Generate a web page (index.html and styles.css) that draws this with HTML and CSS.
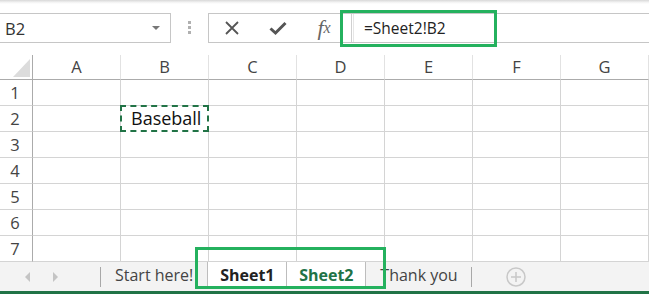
FILE: index.html
```html
<!DOCTYPE html>
<html lang="en">
<head>
    <meta charset="UTF-8">
    <title>Sheet</title>
    <link rel="stylesheet" href="styles.css">
</head>
<body>
<div class="app">
    <div class="top-edge"></div>

    <div class="formula-row">
        <div class="name-box">
            <span>B2</span>
            <span class="drop"></span>
        </div>
        <div class="grip"><i></i><i></i><i></i></div>
        <div class="formula-box">
            <div class="fb-btn">
                <svg width="16" height="16" viewBox="0 0 16 16"><path d="M2 2 L14 14 M14 2 L2 14" stroke="#555" stroke-width="1.8" fill="none"/></svg>
            </div>
            <div class="fb-btn">
                <svg width="18" height="16" viewBox="0 0 18 16"><path d="M1.5 8.5 L6.5 13 L16.5 3" stroke="#555" stroke-width="3" fill="none"/></svg>
            </div>
            <div class="fb-btn fx">f<sub>x</sub></div>
            <div class="fb-sep"></div>
            <div class="fb-text">=Sheet2!B2</div>
        </div>
    </div>

    <div class="sheet">
        <div class="corner"><span></span></div>
        <div class="col-head">A</div>
        <div class="col-head">B</div>
        <div class="col-head">C</div>
        <div class="col-head">D</div>
        <div class="col-head">E</div>
        <div class="col-head">F</div>
        <div class="col-head">G</div>
    </div>
    <div class="sheet" id="rows"></div>

    <div class="tab-bar">
        <div class="nav">
            <span class="arrow left"></span>
            <span class="arrow right"></span>
        </div>
        <div class="tab-sep"></div>
        <div class="tab">Start here!</div>
        <div class="tab active">Sheet1</div>
        <div class="tab active green">Sheet2</div>
        <div class="tab last">Thank you</div>
        <div class="tab-sep"></div>
        <div class="add-sheet">
            <svg width="20" height="20" viewBox="0 0 20 20"><circle cx="10" cy="10" r="9" stroke="#c8c8c8" stroke-width="1.5" fill="none"/><path d="M10 5 V15 M5 10 H15" stroke="#c8c8c8" stroke-width="1.5"/></svg>
        </div>
    </div>
    <div class="bottom-line"></div>

    <div class="mark mark-formula"></div>
    <div class="mark mark-tabs"></div>
</div>

<script>
    const rows = document.getElementById("rows");
    for (let r = 1; r <= 7; r++) {
        const head = document.createElement("div");
        head.className = "row-head";
        head.textContent = r;
        rows.appendChild(head);
        for (let c = 0; c < 7; c++) {
            const cell = document.createElement("div");
            cell.className = "cell";
            if (r === 2 && c === 1) {
                cell.className = "cell copied";
                cell.textContent = "Baseball";
            }
            rows.appendChild(cell);
        }
    }
</script>
</body>
</html>
```

FILE: styles.css
```css
* {
    box-sizing: border-box;
}

body {
    margin: 0;
    background-color: #fff;
    font-family: "Open Sans", "Noto Sans", sans-serif;
    color: #333;
}

.app {
    position: relative;
    width: 649px;
    height: 295px;
    overflow: hidden;
}

.top-edge {
    height: 4px;
    background: linear-gradient(#d8d8d8, #f4f4f4 60%, #fff);
}

.formula-row {
    display: flex;
    align-items: flex-start;
    height: 51px;
    padding-top: 9px;
}

.name-box {
    display: flex;
    align-items: center;
    justify-content: space-between;
    margin-left: -1px;
    width: 172px;
    height: 30px;
    padding: 0 10px 0 5px;
    border: 1px solid #c6c6c6;
    font-size: 16.5px;
    color: #333;
}

.drop {
    width: 0;
    height: 0;
    border-left: 4px solid transparent;
    border-right: 4px solid transparent;
    border-top: 4px solid #777;
}

.grip {
    display: flex;
    flex-direction: column;
    align-items: center;
    gap: 2px;
    width: 37px;
    padding-top: 8px;
}

.grip i {
    width: 3px;
    height: 3px;
    background-color: #b0b0b0;
}

.formula-box {
    display: flex;
    align-items: center;
    flex: 1;
    height: 30px;
    margin-right: -1px;
    border: 1px solid #c6c6c6;
}

.fb-btn {
    display: flex;
    align-items: center;
    justify-content: center;
    width: 46px;
    height: 100%;
}

.fx {
    width: 50px;
    padding-right: 4px;
    font-family: "Liberation Serif", serif;
    font-style: italic;
    font-size: 22px;
    color: #666;
}

.fx sub {
    font-size: 16px;
    vertical-align: -1px;
}

.fb-sep {
    width: 3px;
    height: 100%;
    border-left: 1px solid #d0d0d0;
    border-right: 1px solid #e6e6e6;
}

.fb-text {
    padding-left: 10px;
    font-size: 15.5px;
    color: #222;
}

.sheet {
    display: grid;
    grid-template-columns: 33px repeat(7, 88px);
}

.corner {
    position: relative;
    height: 25px;
    border-right: 1px solid #ababab;
    border-bottom: 1px solid #ababab;
}

.corner span {
    position: absolute;
    right: 2px;
    bottom: 2px;
    width: 0;
    height: 0;
    border-left: 17px solid transparent;
    border-bottom: 18px solid #dcdcdc;
}

.col-head {
    height: 25px;
    border-right: 1px solid #e2e2e2;
    border-bottom: 1px solid #ababab;
    text-align: center;
    font-size: 16.5px;
    line-height: 24px;
    color: #444;
}

.row-head {
    height: 26px;
    padding-right: 2px;
    border-right: 1px solid #ababab;
    border-bottom: 1px solid #d4d4d4;
    text-align: center;
    font-size: 16.5px;
    line-height: 25px;
    color: #444;
}

.cell {
    height: 26px;
    border-right: 1px solid #d4d4d4;
    border-bottom: 1px solid #d4d4d4;
}

.cell.copied {
    border: 2px dashed #217346;
    margin: -1px 0 0 -1px;
    height: 27px;
    padding-left: 9px;
    font-size: 18px;
    line-height: 22px;
    color: #111;
}

.tab-bar {
    display: flex;
    align-items: stretch;
    height: 30px;
    margin-top: -1px;
    border-top: 1px solid #c6c6c6;
    background-color: #f3f3f3;
}

.nav {
    display: flex;
    align-items: center;
    gap: 23px;
    width: 100px;
    padding-left: 25px;
}

.arrow {
    width: 0;
    height: 0;
    border-top: 5px solid transparent;
    border-bottom: 5px solid transparent;
}

.arrow.left {
    border-right: 5px solid #c4c4c4;
}

.arrow.right {
    border-left: 5px solid #c4c4c4;
}

.tab-sep {
    width: 1px;
    margin: 5px 0 4px;
    background-color: #a8a8a8;
}

.tab {
    padding: 0 14px;
    font-size: 16px;
    line-height: 26px;
    color: #444;
}

.tab.active {
    width: 79px;
    padding: 0;
    text-align: center;
    font-weight: bold;
    color: #222;
    background-color: #fff;
    border-left: 1px solid #bdbdbd;
    margin-bottom: 2px;
}

.tab.green {
    width: 80px;
    color: #217346;
    border-right: 1px solid #bdbdbd;
}

.tab.last {
    padding: 0 13px 0 14px;
}

.add-sheet {
    display: flex;
    align-items: center;
    padding-left: 34px;
}

.bottom-line {
    height: 3px;
    background-color: #217346;
}

.mark {
    position: absolute;
    border: 3px solid #24b15e;
}

.mark-formula {
    left: 340px;
    top: 10px;
    width: 157px;
    height: 37px;
}

.mark-tabs {
    left: 195px;
    top: 247px;
    width: 191px;
    height: 42px;
}
```
